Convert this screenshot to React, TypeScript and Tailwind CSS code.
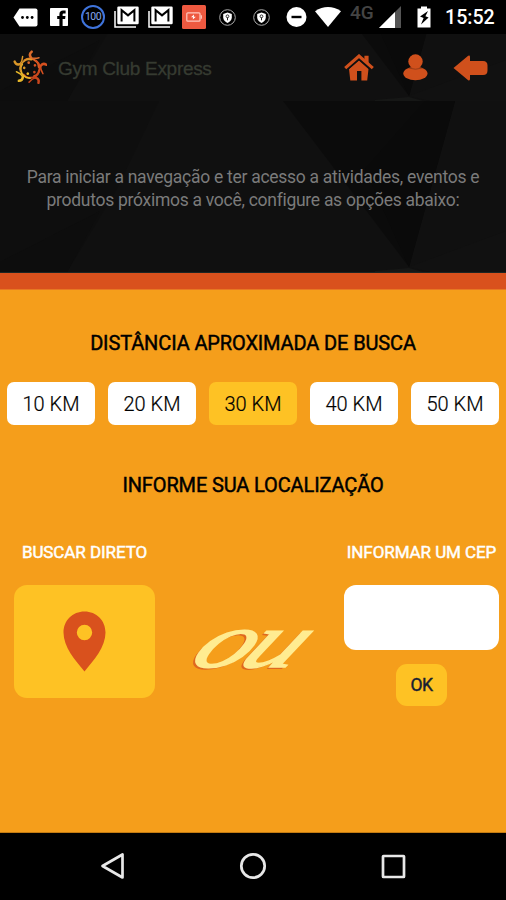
import React from "react";

function Gmail() {
  return (
    <svg width="25" height="22" viewBox="0 0 25 22" fill="none">
      <path d="M1 5V21H22" stroke="#fff" strokeWidth="1.5" />
      <rect x="3.3" y="0.5" width="21.4" height="17.8" rx="1.2" fill="#fff" />
      <path d="M7.6 15.4V4.2L14 9.4L20.4 4.2V15.4" stroke="#000" strokeWidth="2" />
    </svg>
  );
}

function Shield() {
  return (
    <svg width="17" height="17" viewBox="0 0 17 17" fill="none">
      <circle cx="8.5" cy="8.5" r="7.8" stroke="#aaa" strokeWidth="1" />
      <path d="M8.5 3.4L12.8 4.9V8.2C12.8 11 10.8 13 8.5 13.9C6.2 13 4.2 11 4.2 8.2V4.9Z" fill="#fff" />
      <circle cx="8.5" cy="7.3" r="1.4" stroke="#222" strokeWidth="0.9" />
      <path d="M8.5 8.5V11.3" stroke="#222" strokeWidth="1" />
    </svg>
  );
}

function StatusBar() {
  return (
    <div className="flex h-[34px] items-center bg-black">
      <svg className="ml-[13px]" width="25" height="19" viewBox="0 0 25 19">
        <path d="M6.5 0.5H22.5Q24.5 0.5 24.5 2.5V16.5Q24.5 18.5 22.5 18.5H6.5L0.5 9.5Z" fill="#fff" />
        <circle cx="9.5" cy="9.5" r="1.4" />
        <circle cx="14.3" cy="9.5" r="1.4" />
        <circle cx="19.1" cy="9.5" r="1.4" />
      </svg>
      <svg className="ml-[12px]" width="18" height="18" viewBox="0 0 18 18">
        <rect width="18" height="18" rx="0.8" fill="#fff" />
        <path d="M9.4 18V11H7.2V8.1H9.4V6.2C9.4 3.8 10.9 2.6 13 2.6H15.6V5.4H14C12.9 5.4 12.6 5.9 12.6 6.8V8.1H15.5L15.1 11H12.6V18Z" />
      </svg>
      <div className="ml-[13px] flex size-[24px] items-center justify-center rounded-full border-2 border-[#3f74dc] text-[10.5px] tracking-[-0.5px] text-[#86a7ef]">
        100
      </div>
      <div className="ml-[9px]"><Gmail /></div>
      <div className="ml-[9px]"><Gmail /></div>
      <svg className="ml-[9px]" width="24" height="24" viewBox="0 0 24 24" fill="none">
        <rect width="24" height="24" rx="1.5" fill="#ee5940" />
        <rect x="4.8" y="7.8" width="13.2" height="8.4" rx="1" stroke="#ffc8bd" strokeWidth="1.2" />
        <path d="M19.3 10.3V13.7" stroke="#ffc8bd" strokeWidth="1.3" />
        <path d="M12 9.6L9 12.3H11L10.8 14.4L13.8 11.7H11.8Z" fill="#fff" />
      </svg>
      <div className="ml-[13px]"><Shield /></div>
      <div className="ml-[17px]"><Shield /></div>
      <svg className="ml-[16px]" width="21" height="20" viewBox="0 0 21 20">
        <circle cx="10.5" cy="10" r="10" fill="#fff" />
        <rect x="5.5" y="8.8" width="10" height="2.4" />
      </svg>
      <svg className="ml-[8px]" width="26" height="20" viewBox="0 0 26 20">
        <path d="M0 4.2Q13 -4.2 26 4.2L13 20Z" fill="#fff" />
      </svg>
      <div className="-mt-[9px] ml-[9px] w-[25px] text-[19px] font-medium leading-none text-[#444]">4G</div>
      <svg className="ml-[4px]" width="22" height="22" viewBox="0 0 22 22">
        <path d="M0 22L22 0V22Z" fill="#555" />
        <path d="M0 22L16 6V22Z" fill="#fff" />
      </svg>
      <svg className="ml-[16px]" width="14" height="22" viewBox="0 0 14 22">
        <path d="M4 0.5H10V2.5H13.5V21.5H0.5V2.5H4Z" fill="#fff" />
        <path d="M11 5L3 10.6L6.6 12L4 18.4L11.6 11.4L8.4 10.2Z" />
      </svg>
      <div className="ml-[14px] mt-[2px] whitespace-nowrap text-[19.6px] font-medium text-white">15:52</div>
    </div>
  );
}

const figures = [
  { angle: 0, color: "#dc6c2c" },
  { angle: 72, color: "#d6501f" },
  { angle: 144, color: "#c8461d" },
  { angle: 216, color: "#e8b82a" },
  { angle: 288, color: "#d99628" },
];

function Logo() {
  return (
    <svg width="34" height="36" viewBox="40 46 102 108" fill="none" strokeLinecap="round">
      {figures.map((f) => (
        <g key={f.angle} transform={`rotate(${f.angle} 91 101)`} stroke={f.color}>
          <path d="M96 51Q87 58 93 67" strokeWidth="7.5" />
          <path d="M93 68Q104 73 118 69" strokeWidth="4.5" />
          <path d="M74 77Q94 64 112 82Q117 88 117 97" strokeWidth="5.5" />
          <circle cx="87" cy="84" r="4" fill={f.color} stroke="none" />
        </g>
      ))}
    </svg>
  );
}

function Facets() {
  return (
    <svg className="absolute bottom-0 left-0" width="506" height="171" viewBox="0 0 506 171">
      <rect width="506" height="171" fill="#101010" />
      <path d="M0 0H159L117 88L67 171H0Z" fill="#0e0e0e" />
      <path d="M0 161L100 110L67 171H0Z" fill="#0d0d0d" />
      <path d="M283 0H455L409 166Z" fill="#0b0b0b" />
      <path d="M425 0H455L409 166L365 68Z" fill="#0a0a0a" />
      <path d="M409 166L506 130V171H430Z" fill="#111111" />
      <path d="M375 170L409 167L423 171H375Z" fill="#161716" />
    </svg>
  );
}

function Header() {
  return (
    <header className="relative h-[67px] overflow-hidden">
      <Facets />
      <div className="relative flex h-full items-center">
        <div className="ml-[13px]"><Logo /></div>
        <span className="ml-[11px] mt-[4px] w-[154px] whitespace-nowrap font-['Liberation_Sans',Arial,sans-serif] text-[19px] tracking-[-0.3px] text-[#363b31] [-webkit-text-stroke:0.3px_#363b31]">
          Gym Club Express
        </span>
        <svg className="ml-[132px]" width="30" height="27" viewBox="0 0 30 27">
          <path d="M15 6.6L24.5 15L23.2 26.5H17.4V17H13V26.5H6.3L5 15Z" fill="#d0501c" />
          <path d="M20.4 1.8H24.6V11L20.4 7Z" fill="#d0501c" />
          <path d="M3.5 15.4L15 5.2L26.5 15.4" fill="none" stroke="#101010" strokeWidth="1.4" />
          <path d="M1.2 14.2L15 2L28.8 14.2" fill="none" stroke="#d0501c" strokeWidth="3.1" />
        </svg>
        <svg className="ml-[29px]" width="25" height="27" viewBox="0 0 25 27">
          <circle cx="12.5" cy="7.5" r="7.2" fill="#d0501c" />
          <ellipse cx="12.4" cy="19.5" rx="12.1" ry="6.8" fill="#d0501c" />
          <path d="M5.8 14.1Q12.5 16.3 19.1 14.1" stroke="#8b3716" fill="none" strokeWidth="0.8" />
        </svg>
        <svg className="ml-[25px]" width="35" height="26" viewBox="0 0 35 26">
          <path d="M0.5 13L15.2 0.8Q17 0 17 2V6H30Q34.5 6 34.5 10.5V15.5Q34.5 20 30 20H17V24Q17 26 15.2 25.2Z" fill="#d0501c" />
        </svg>
      </div>
    </header>
  );
}

const distances = [10, 20, 30, 40, 50];

export default function App() {
  return (
    <div className="flex h-[900px] w-[506px] flex-col overflow-hidden bg-black font-[Roboto,sans-serif]">
      <StatusBar />
      <Header />
      <section className="relative h-[172px] border-b border-[#1c2523]">
        <Facets />
        <p className="relative whitespace-nowrap pt-[65px] text-center text-[17.5px] leading-[22.5px] tracking-[-0.28px] text-[#7b7b7b]">
          Para iniciar a navegação e ter acesso a atividades, eventos e
          <br />
          produtos próximos a você, configure as opções abaixo:
        </p>
      </section>
      <main className="flex h-[560px] flex-col border-b border-[#c37b12] bg-[#f59e1b]">
        <div className="h-[17px] shrink-0 border-b border-[#e77822] bg-[#d9511d]" />
        <h2 className="mt-[41px] text-center text-[20px] leading-[24px] tracking-[-0.13px] text-black [-webkit-text-stroke:0.45px_black]">
          DISTÂNCIA APROXIMADA DE BUSCA
        </h2>
        <div className="mt-[27px] flex justify-between px-[7px]">
          {distances.map((km) => (
            <button
              key={km}
              className={`h-[43px] w-[88px] rounded-[7px] text-[20px] font-light text-black [-webkit-text-stroke:0.2px_black] ${km === 30 ? "bg-[#fec224]" : "bg-white"}`}
            >
              {km} KM
            </button>
          ))}
        </div>
        <h2 className="mt-[48px] text-center text-[20px] leading-[24px] tracking-[-0.13px] text-black [-webkit-text-stroke:0.45px_black]">
          INFORME SUA LOCALIZAÇÃO
        </h2>
        <div className="mt-[45px] flex justify-between pl-[14px] pr-[7px]">
          <div className="flex w-[141px] flex-col items-center">
            <h3 className="whitespace-nowrap text-[17px] leading-[20px] tracking-[-0.08px] text-white [-webkit-text-stroke:0.5px_white]">BUSCAR DIRETO</h3>
            <button className="mt-[23px] flex h-[113px] w-full items-center justify-center rounded-[13px] bg-[#fec224]">
              <svg width="43" height="61" viewBox="0 0 43 61">
                <path
                  fillRule="evenodd"
                  d="M21.5 0.5C9.5 0.5 0.5 9.5 0.5 21.5C0.5 36 12 49 21.5 60.5C31 49 42.5 36 42.5 21.5C42.5 9.5 33.5 0.5 21.5 0.5ZM21.5 13.8A7.7 7.7 0 1 1 21.5 29.2A7.7 7.7 0 1 1 21.5 13.8Z"
                  fill="#d9511d"
                />
              </svg>
            </button>
          </div>
          <div className="flex w-[124px] items-center justify-center pl-[8px] pt-[34px]">
            <span className="block origin-center scale-x-[1.42] skew-x-[-26deg] font-['Liberation_Serif',serif] text-[78px] italic leading-none tracking-[-4px] text-[#ffec91] [-webkit-text-stroke:1.6px_#ffec91] [text-shadow:-1.5px_1.5px_0_#df6820]">
              ou
            </span>
          </div>
          <div className="flex w-[155px] flex-col items-center">
            <h3 className="whitespace-nowrap text-[17px] leading-[20px] tracking-[-0.08px] text-white [-webkit-text-stroke:0.5px_white]">INFORMAR UM CEP</h3>
            <input aria-label="CEP" className="mt-[23px] h-[65px] w-full rounded-[12px] bg-white px-3 text-[20px] outline-none" />
            <button className="mt-[14px] h-[42px] w-[51px] rounded-[11px] bg-[#fec224] text-[17.5px] tracking-[-0.4px] text-[#172033] [-webkit-text-stroke:0.4px_#172033]">OK</button>
          </div>
        </div>
      </main>
      <nav className="flex flex-1 items-center bg-black pb-[1px]">
        <svg className="ml-[100px]" width="25" height="28" viewBox="0 0 25 28" fill="none">
          <path d="M22.5 2.5V25.5L2.5 14Z" stroke="#e8e8e8" strokeWidth="2.7" strokeLinejoin="round" />
        </svg>
        <svg className="ml-[114px]" width="28" height="28" viewBox="0 0 28 28" fill="none">
          <circle cx="14" cy="14" r="11.7" stroke="#e8e8e8" strokeWidth="2.7" />
        </svg>
        <svg className="ml-[114px]" width="25" height="25" viewBox="0 0 25 25" fill="none">
          <rect x="2" y="2" width="21" height="21" rx="0.5" stroke="#e8e8e8" strokeWidth="2.7" />
        </svg>
      </nav>
    </div>
  );
}
